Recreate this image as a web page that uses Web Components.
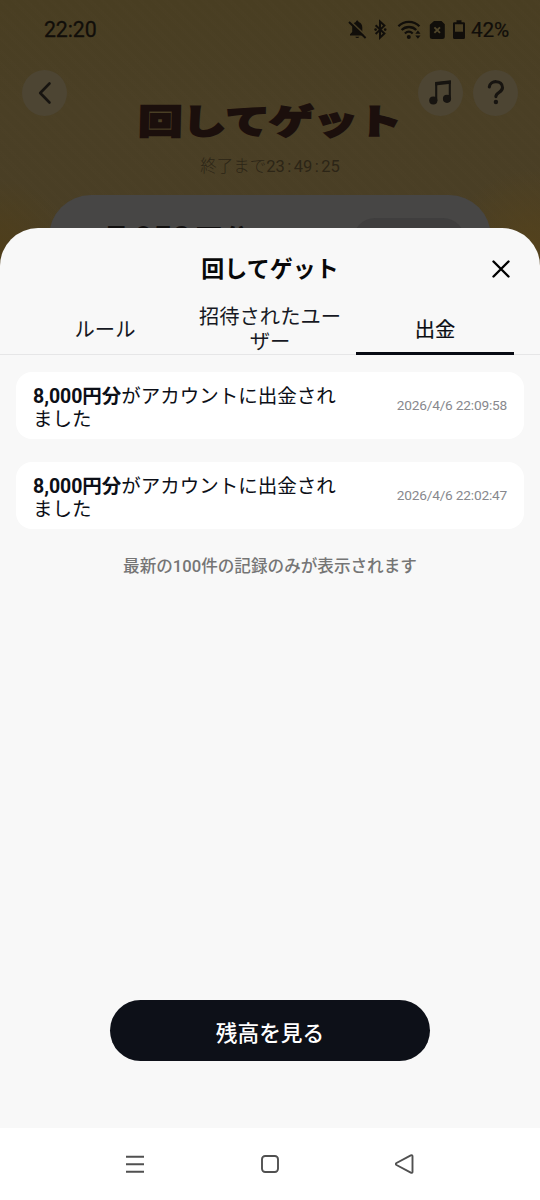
<!DOCTYPE html>
<html lang="ja">
<head>
<meta charset="UTF-8">
<meta name="viewport" content="width=device-width, initial-scale=1.0">
<title>回してゲット</title>
<style>
    body{
        margin: 0;
        width: 540px;
        height: 1200px;
        overflow: hidden;
        background: #f8f8f8;
        font-family: Roboto, "Noto Sans CJK JP", sans-serif;
        color: #0c0f17;
    }
</style>
</head>
<body>
<phone-screen>
    <game-backdrop>
        <status-bar time="22:20" battery="42%"></status-bar>
        <game-header heading="回してゲット" countdown="23:49:25"></game-header>
        <prize-panel amount="7,950" unit="円分"></prize-panel>
    </game-backdrop>
    <bottom-sheet heading="回してゲット">
        <tab-list slot="tabs">
            <tab-item>ルール</tab-item>
            <tab-item>招待されたユーザー</tab-item>
            <tab-item active>出金</tab-item>
        </tab-list>
        <record-card date="2026/4/6 22:09:58"><b>8,000円分</b>がアカウントに出金されました</record-card>
        <record-card date="2026/4/6 22:02:47"><b>8,000円分</b>がアカウントに出金されました</record-card>
        <record-note>最新の100件の記録のみが表示されます</record-note>
        <pill-button slot="footer">残高を見る</pill-button>
    </bottom-sheet>
    <nav-bar></nav-bar>
</phone-screen>

<script>
//Base para todos los componentes: clona el template en el shadow root
class Base extends HTMLElement {
    constructor(){
        super();
        this.attachShadow({mode: "open"});
    }

    connectedCallback(){
        const template = document.createElement('template');
        template.innerHTML = `<style>${this.getStyles()}</style>${this.getTemplate()}`;
        this.shadowRoot.appendChild(template.content.cloneNode(true));
    }

    attr(name){
        return this.getAttribute(name) || '';
    }
}

class PhoneScreen extends Base {
    getTemplate(){
        return `<slot></slot>`;
    }
    getStyles(){
        return `
            :host{
                display: flex;
                flex-direction: column;
                height: 1200px;
            }
        `;
    }
}

//Fondo oscurecido del juego
class GameBackdrop extends Base {
    getTemplate(){
        return `<slot></slot>`;
    }
    getStyles(){
        return `
            :host{
                display: flex;
                flex-direction: column;
                flex: none;
                height: 270px;
                overflow: hidden;
                background:
                    radial-gradient(circle at 0 255px, #4f3e1a 0, transparent 75px),
                    radial-gradient(circle at 530px 250px, #54421c 0, transparent 80px),
                    repeating-linear-gradient(45deg, rgba(90,75,50,.05) 0 4px, transparent 4px 9px),
                    linear-gradient(#493e22, #4a3f25 40%, #493e25);
            }
        `;
    }
}

class StatusBar extends Base {
    getTemplate(){
        return `
            <span class="time">${this.attr('time')}</span>
            <svg width="119" height="24" viewBox="0 0 119 24">
                <path d="M3 17.500v-1.300l2.200-2.200V9.500c0-2.800 1.400-4.800 3.700-5.400 0-2.300 2.700-2.300 2.700 0 2.300.6 3.700 2.600 3.700 5.400V14l2.200 2.200v1.300z" fill="#110e0a"/>
                <path d="M8.300 18.700h3.900a2 1.800 0 0 1-3.900 0z" fill="#110e0a"/>
                <path d="M3.200 2.800L20 18.800" stroke="#4a3f25" stroke-width="1.600"/>
                <path d="M2 4L18.600 20" stroke="#110e0a" stroke-width="1.900"/>
                <path d="M28.600 7.300l8.800 8.300-4.400 4.100V3.500l4.400 4.100-8.800 8.400" fill="none" stroke="#110e0a" stroke-width="2"/>
                <circle cx="28.600" cy="11.600" r="1.300" fill="#110e0a"/><circle cx="38.200" cy="11.600" r="1.300" fill="#110e0a"/>
                <g fill="none" stroke="#110e0a" stroke-width="2.300">
                    <path d="M51.400 8.300c5.700-5.800 15.300-5.800 21 0"/>
                    <path d="M54.600 12c4-4 10.800-4 14.600 0"/>
                    <path d="M57.900 15.500c2.400-2.300 5.400-2.300 7.800 0"/>
                </g>
                <circle cx="61.800" cy="19" r="2" fill="#110e0a"/>
                <path d="M68.300 15.800l2.600-3.200 2.600 3.200zM68.300 17.600l2.600 3.200 2.600-3.200z" fill="#110e0a"/>
                <path d="M87 3h7.500l3.300 3.300v12.200a2.500 2.500 0 0 1-2.500 2.500H85.300a2.500 2.500 0 0 1-2.500-2.500V6.700z" fill="#110e0a"/>
                <path d="M87.400 9.300l5.600 5.600m0-5.600l-5.600 5.600" stroke="#4f452a" stroke-width="1.900"/>
                <path d="M109.500 2.300h5v2h2.200q1.300 0 1.300 1.300v14q0 1.500-1.500 1.500h-9q-1.500 0-1.500-1.500v-14q0-1.300 1.300-1.300h2.200zM108 6.300v7.500h8V6.300z" fill="#110e0a" fill-rule="evenodd"/>
            </svg>
            <span class="battery">${this.attr('battery')}</span>
        `;
    }
    getStyles(){
        return `
            :host{
                display: flex;
                align-items: center;
                flex: none;
                height: 59px;
                padding: 0 30px 1px 44px;
                color: #110e0a;
                letter-spacing: -.1px;
            }
            .time{
                flex: 1;
                font-size: 21.300px;
                -webkit-text-stroke: .3px #110e0a;
            }
            .battery{
                margin-left: 5px;
                width: 39px;
                white-space: nowrap;
                font-size: 20.800px;
                letter-spacing: -.2px;
                -webkit-text-stroke: .2px #110e0a;
            }
        `;
    }
}

class GameHeader extends Base {
    getTemplate(){
        return `
            <div class="side">
                <round-icon>
                    <svg width="44" height="44" viewBox="0 0 44 44"><path d="M26.500 12.500L17.200 22l9.300 9.500" fill="none" stroke="#171410" stroke-width="2.600" stroke-linecap="round" stroke-linejoin="round"/></svg>
                </round-icon>
            </div>
            <div class="center">
                <div class="logo"><span>${this.attr('heading')}</span></div>
                <div class="count">終了まで<span>${this.attr('countdown').split(':').join('<i>:</i>')}</span></div>
            </div>
            <div class="side right">
                <round-icon>
                    <svg width="44" height="44" viewBox="0 0 44 44"><path d="M17.200 30V12l13.600-1.500V28" fill="none" stroke="#171410" stroke-width="2.100"/><path d="M16.200 11.500l15.600-1.700v3L16.200 14.500z" fill="#171410"/><circle cx="14.300" cy="29.500" r="4.100" fill="#171410"/><circle cx="28" cy="27.800" r="4.100" fill="#171410"/></svg>
                </round-icon>
                <round-icon>
                    <svg width="44" height="44" viewBox="0 0 44 44"><path d="M15.300 16c.6-7.400 13.400-7 13.200.6-.2 5-6.600 4.800-6.600 9" fill="none" stroke="#171410" stroke-width="3.100" stroke-linecap="round"/><circle cx="21.900" cy="31" r="2.200" fill="#171410"/></svg>
                </round-icon>
            </div>
        `;
    }
    getStyles(){
        return `
            :host{
                display: grid;
                grid-template-columns: 110px 1fr 110px;
                flex: none;
                height: 135px;
                padding: 10px 22px 0;
                box-sizing: border-box;
            }
            .side{
                display: flex;
                gap: 10px;
            }
            .right{
                justify-content: flex-end;
            }
            .center{
                display: flex;
                flex-direction: column;
                align-items: center;
                padding-top: 32px;
            }
            .logo{
                height: 40px;
                line-height: 40px;
                color: #1b0f0c;
                font-weight: 900;
                font-size: 34.500px;
                white-space: nowrap;
            }
            .logo span{
                display: inline-block;
                transform: scaleX(1.280) skewX(-1deg);
                -webkit-text-stroke: 1.800px #1b0f0c;
            }
            .count{
                display: flex;
                margin-top: 13px;
                line-height: 24px;
                font-size: 16.500px;
                color: #2c2516;
                font-weight: 300;
                white-space: nowrap;
            }
            .count span{
                font-weight: 400;
            }
            i{
                display: inline-block;
                width: 9px;
                text-align: center;
                font-style: normal;
            }
        `;
    }
}

class RoundIcon extends Base {
    getTemplate(){
        return `<slot></slot>`;
    }
    getStyles(){
        return `
            :host{
                display: flex;
                align-items: center;
                justify-content: center;
                width: 45px;
                height: 46px;
                border-radius: 50%;
                background: #4d4533;
            }
        `;
    }
}

//Panel del premio, queda casi todo debajo de la hoja
class PrizePanel extends Base {
    getTemplate(){
        return `<strong>${this.attr('amount')}<small>${this.attr('unit')}</small></strong><span class="chip"></span>`;
    }
    getStyles(){
        return `
            :host{
                display: flex;
                justify-content: space-between;
                align-items: flex-start;
                flex: none;
                height: 100px;
                margin: 0 49px;
                padding: 23px 26px 0 58px;
                box-sizing: border-box;
                border-radius: 42px;
                background: #474645;
            }
            strong{
                margin-top: 2px;
                font-size: 33px;
                line-height: 38px;
                color: #12100f;
            }
            small{
                margin-left: 4px;
                font-size: 28px;
                line-height: 1;
            }
            .chip{
                width: 112px;
                height: 44px;
                border-radius: 22px;
                background: #3f3e3e;
            }
        `;
    }
}

class BottomSheet extends Base {
    getTemplate(){
        return `
            <header>
                <h1>${this.attr('heading')}</h1>
                <svg width="20" height="20" viewBox="0 0 20 20"><path d="M2.500 2.500l15 15m0-15l-15 15" stroke="#000" stroke-width="2.400" stroke-linecap="round"/></svg>
            </header>
            <slot name="tabs"></slot>
            <main><slot></slot></main>
            <footer><slot name="footer"></slot></footer>
        `;
    }
    getStyles(){
        return `
            :host{
                display: flex;
                flex-direction: column;
                flex: none;
                height: 900px;
                margin-top: -42px;
                z-index: 1;
                border-radius: 38px 38px 0 0;
                background: #f8f8f8;
            }
            header{
                display: grid;
                grid-template-columns: 60px 1fr 60px;
                align-items: center;
                flex: none;
                height: 80px;
            }
            h1{
                grid-column: 2;
                margin: 0;
                padding-top: 3px;
                text-align: center;
                font-size: 23px;
                font-weight: 700;
                line-height: 30px;
                color: #080808;
            }
            svg{
                margin: 2px 0 0 11px;
            }
            main{
                display: flex;
                flex-direction: column;
                flex: 1;
                gap: 23px;
                padding: 17px 16px 0;
            }
            footer{
                display: flex;
                justify-content: center;
                padding-bottom: 67px;
            }
        `;
    }
}

class TabList extends Base {
    getTemplate(){
        return `<slot></slot>`;
    }
    getStyles(){
        return `
            :host{
                display: grid;
                grid-template-columns: repeat(3, 158px);
                column-gap: 7px;
                justify-content: center;
                flex: none;
                height: 47px;
                box-sizing: border-box;
                border-bottom: 1px solid #e6e6e7;
            }
        `;
    }
}

class TabItem extends Base {
    getTemplate(){
        return `<span><slot></slot></span>`;
    }
    getStyles(){
        return `
            :host{
                display: flex;
                align-items: center;
                justify-content: center;
                box-sizing: border-box;
                height: 47px;
                padding: 0 6px;
                border-bottom: 3px solid transparent;
                text-align: center;
                font-size: 20.300px;
                line-height: 25px;
                color: #161823;
            }
            :host([active]){
                border-bottom-color: #080b13;
                color: #0a0c12;
            }
            :host([active]) span{
                -webkit-text-stroke: .2px #0a0c12;
            }
        `;
    }
}

class RecordCard extends Base {
    getTemplate(){
        return `<p><slot></slot></p><time>${this.attr('date')}</time>`;
    }
    getStyles(){
        return `
            :host{
                display: flex;
                align-items: center;
                justify-content: space-between;
                flex: none;
                height: 67px;
                padding: 0 17px;
                border-radius: 16px;
                background: #fff;
            }
            p{
                margin: 0;
                padding-top: 4px;
                width: 312px;
                font-size: 19.500px;
                line-height: 23px;
            }
            ::slotted(b){
                font-weight: 700;
                letter-spacing: -.050px;
            }
            time{
                padding-bottom: 1px;
                font-size: 13.700px;
                letter-spacing: -.200px;
                color: #87888d;
                white-space: nowrap;
            }
        `;
    }
}

class RecordNote extends Base {
    getTemplate(){
        return `<slot></slot>`;
    }
    getStyles(){
        return `
            :host{
                display: block;
                margin-top: 3px;
                text-align: center;
                font-size: 16.600px;
                line-height: 24px;
                font-weight: 500;
                color: #757575;
            }
        `;
    }
}

class PillButton extends Base {
    getTemplate(){
        return `<button><slot></slot></button>`;
    }
    getStyles(){
        return `
            button{
                display: block;
                width: 320px;
                height: 61px;
                padding: 2px 0 0;
                border: 0;
                border-radius: 31px;
                background: #0d1018;
                color: #fff;
                font: inherit;
                font-size: 21.700px;
                font-weight: 500;
            }
        `;
    }
}

//Barra de navegacion del sistema
class NavBar extends Base {
    getTemplate(){
        return `
            <svg width="20" height="20" viewBox="0 0 20 20"><path d="M1 2.700h18M1 10.200h18M1 17.700h18"/></svg>
            <svg width="20" height="20" viewBox="0 0 20 20"><rect x="2" y="2" width="16" height="16" rx="3.200"/></svg>
            <svg width="20" height="20" viewBox="0 0 20 20"><path d="M15.800 1.300L1.500 9q-1.500 1 0 2l14.300 7.700q1.700.6 1.700-1V2.300q0-1.600-1.700-1z"/></svg>
        `;
    }
    getStyles(){
        return `
            :host{
                display: grid;
                grid-template-columns: repeat(3, 20px);
                column-gap: 115px;
                justify-content: center;
                align-items: center;
                flex: none;
                height: 72px;
                background: #fff;
            }
            svg{
                fill: none;
                stroke: #505050;
                stroke-width: 1.900;
                stroke-linejoin: round;
            }
        `;
    }
}

customElements.define("phone-screen", PhoneScreen);
customElements.define("game-backdrop", GameBackdrop);
customElements.define("status-bar", StatusBar);
customElements.define("round-icon", RoundIcon);
customElements.define("game-header", GameHeader);
customElements.define("prize-panel", PrizePanel);
customElements.define("bottom-sheet", BottomSheet);
customElements.define("tab-list", TabList);
customElements.define("tab-item", TabItem);
customElements.define("record-card", RecordCard);
customElements.define("record-note", RecordNote);
customElements.define("pill-button", PillButton);
customElements.define("nav-bar", NavBar);
</script>
</body>
</html>
